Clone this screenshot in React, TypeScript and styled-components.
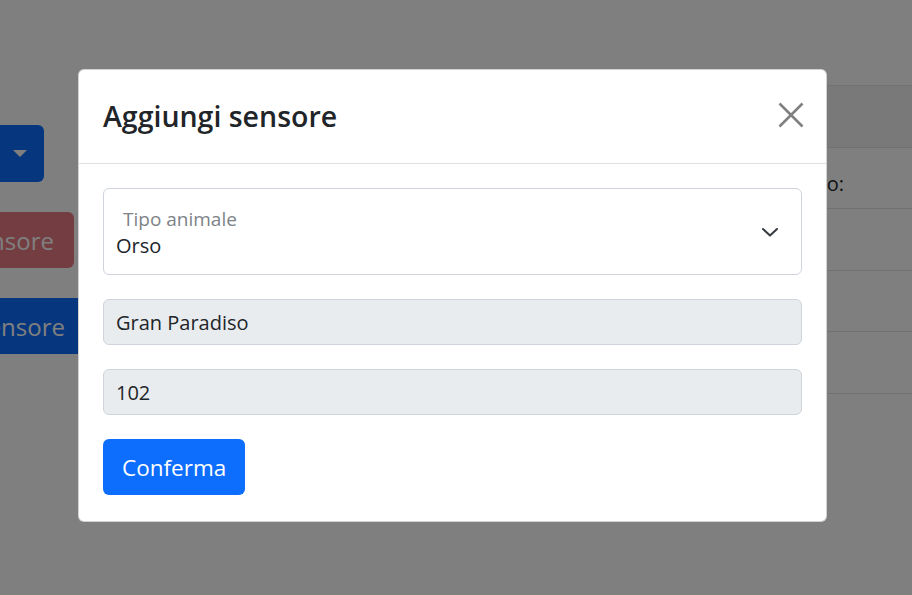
import React from "react";
import styled, { createGlobalStyle } from "styled-components";

const Global = createGlobalStyle`
  html, body { margin: 0; padding: 0; }
  body {
    width: 912px;
    height: 595px;
    overflow: hidden;
    background: #ffffff;
    font-family: "Open Sans", "Noto Sans", sans-serif;
    color: #212529;
  }
`;

const Page = styled.div`
  position: relative;
  width: 912px;
  height: 595px;
  display: flex;
  overflow: hidden;
`;

const LeftColumn = styled.div`
  display: flex;
  flex-direction: column;
  align-items: flex-start;
  gap: 30px;
  padding-top: 125px;
  margin-left: -150px;
  width: 260px;
  flex-shrink: 0;
`;

const PageButton = styled.button<{ $w: number; $h: number; $variant: "primary" | "danger" }>`
  width: ${(p) => p.$w}px;
  height: ${(p) => p.$h}px;
  border: none;
  border-radius: 6px;
  display: flex;
  align-items: center;
  justify-content: flex-end;
  padding: 0 20px;
  font-family: inherit;
  font-size: 24px;
  white-space: nowrap;
  color: #ffffff;
  background: ${(p) => (p.$variant === "primary" ? "#0d6efd" : "#dc3545")};
  opacity: ${(p) => (p.$variant === "danger" ? 0.65 : 1)};
`;

const Caret = styled.span`
  width: 0;
  height: 0;
  border-left: 7px solid transparent;
  border-right: 7px solid transparent;
  border-top: 7px solid #ffffff;
  margin-right: -3px;
`;

const TableArea = styled.div`
  margin-left: auto;
  padding-top: 86px;
  width: 412px;
  flex-shrink: 0;
  display: flex;
  flex-direction: column;
`;

const Row = styled.div<{ $head?: boolean }>`
  height: 62.6px;
  box-sizing: border-box;
  display: grid;
  grid-template-columns: 344px 1fr;
  align-items: center;
  font-size: 20px;
  background: ${(p) => (p.$head ? "#f2f2f2" : "transparent")};
  border-top: 1px solid #dee2e6;
  margin-top: -1px;
  &:last-child {
    border-bottom: 1px solid #dee2e6;
  }
`;

const Cell = styled.div`
  text-align: right;
  white-space: nowrap;
  padding-top: 10px;
`;

const Backdrop = styled.div`
  position: absolute;
  inset: 0;
  background: rgba(0, 0, 0, 0.5);
`;

const Modal = styled.div`
  position: absolute;
  left: 78px;
  top: 69px;
  width: 749px;
  height: 453px;
  box-sizing: border-box;
  background: #ffffff;
  border: 1px solid rgba(0, 0, 0, 0.175);
  border-radius: 6px;
  display: flex;
  flex-direction: column;
`;

const Header = styled.div`
  height: 94px;
  box-sizing: border-box;
  padding: 0 24px;
  display: flex;
  align-items: center;
  justify-content: space-between;
  border-bottom: 1px solid #dee2e6;
`;

const Title = styled.h5`
  margin: 0;
  font-size: 28.5px;
  font-weight: 600;
  color: #212529;
  line-height: 1.2;
`;

const Close = styled.button`
  width: 30px;
  height: 30px;
  padding: 0;
  border: none;
  background: transparent;
  display: flex;
  align-items: center;
  justify-content: center;
  margin: -4px -4px 0 0;
`;

const Body = styled.div`
  padding: 24px 24px;
  display: flex;
  flex-direction: column;
  gap: 24px;
`;

const Floating = styled.div`
  height: 87px;
  box-sizing: border-box;
  border: 1px solid #ced4da;
  border-radius: 6px;
  display: flex;
  align-items: center;
  padding: 0 22px 0 12px;
`;

const FloatText = styled.div`
  flex: 1;
  display: flex;
  flex-direction: column;
  padding-top: 3px;
`;

const FloatLabel = styled.span`
  font-size: 19px;
  color: #7d8287;
  padding-left: 7px;
  line-height: 26px;
`;

const FloatValue = styled.span`
  font-size: 20px;
  color: #212529;
  line-height: 28px;
`;

const Input = styled.div`
  height: 46px;
  box-sizing: border-box;
  border: 1px solid #ced4da;
  border-radius: 6px;
  background: #e9ecef;
  display: flex;
  align-items: center;
  padding: 0 12px;
  font-size: 20px;
  color: #212529;
`;

const Submit = styled.button`
  align-self: flex-start;
  height: 56px;
  padding: 0 19px;
  border: none;
  border-radius: 6px;
  background: #0d6efd;
  color: #ffffff;
  font-family: inherit;
  font-size: 22.5px;
`;

export default function App() {
  return (
    <>
      <Global />
      <Page>
        <LeftColumn>
          <PageButton $w={194} $h={57} $variant="primary">
            <Caret />
          </PageButton>
          <PageButton $w={224} $h={56} $variant="danger">Rimuovi sensore</PageButton>
          <PageButton $w={235} $h={56} $variant="primary">Aggiungi sensore</PageButton>
        </LeftColumn>
        <TableArea>
          <Row $head>
            <Cell />
            <Cell />
          </Row>
          <Row>
            <Cell>Stato:</Cell>
            <Cell />
          </Row>
          <Row>
            <Cell />
            <Cell />
          </Row>
          <Row>
            <Cell />
            <Cell />
          </Row>
          <Row>
            <Cell />
            <Cell />
          </Row>
        </TableArea>
        <Backdrop />
        <Modal>
          <Header>
            <Title>Aggiungi sensore</Title>
            <Close aria-label="Chiudi">
              <svg width="26" height="26" viewBox="0 0 26 26">
                <path d="M1.5 1.5 L24.5 24.5 M24.5 1.5 L1.5 24.5" stroke="#808080" strokeWidth="2.6" />
              </svg>
            </Close>
          </Header>
          <Body>
            <Floating>
              <FloatText>
                <FloatLabel>Tipo animale</FloatLabel>
                <FloatValue>Orso</FloatValue>
              </FloatText>
              <svg width="18" height="12" viewBox="0 0 18 12">
                <path d="M2 3 L9 9.5 L16 3" stroke="#343a40" strokeWidth="2" fill="none" strokeLinecap="round" strokeLinejoin="round" />
              </svg>
            </Floating>
            <Input>Gran Paradiso</Input>
            <Input>102</Input>
            <Submit>Conferma</Submit>
          </Body>
        </Modal>
      </Page>
    </>
  );
}
